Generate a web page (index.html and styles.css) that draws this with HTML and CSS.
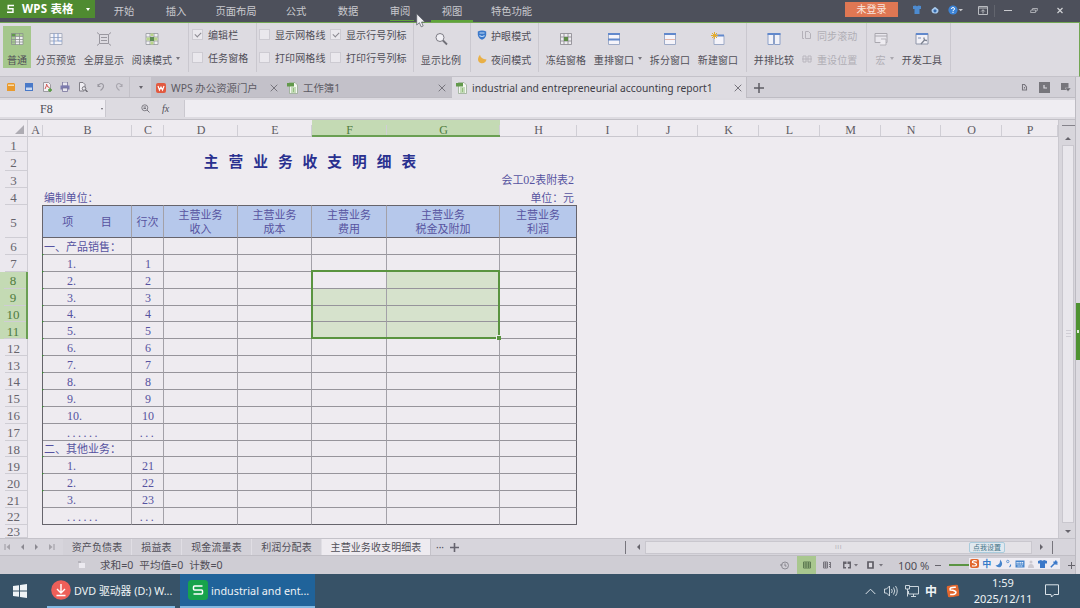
FILE: index.html
```
<!DOCTYPE html>
<html lang="zh-CN">
<head>
    <meta charset="UTF-8">
    <title>industrial and entrepreneurial accounting report1</title>
    <link rel="stylesheet" href="styles.css">
</head>
<body>

    <!-- Title bar -->
    <div class="titlebar">
        <div class="app-btn">
            <svg width="9" height="10" viewBox="0 0 9 10"><path d="M8 1.500H2.200V4.800H7V8.300H1" fill="none" stroke="#fff" stroke-width="1.400"/></svg>
            <b>WPS 表格</b><i class="caret"></i>
        </div>
        <div class="menu">
            <span>开始</span><span>插入</span><span class="wide">页面布局</span><span>公式</span><span>数据</span><span class="hover">审阅</span><span class="active">视图</span><span class="wide last">特色功能</span>
        </div>
        <div class="login">未登录</div>
        <div class="win-tools">
            <svg width="10" height="10" viewBox="0 0 10 10"><path d="M1 1L3.500 .5Q5 2 6.500 .5L9 1V4H7.500V9H2.500V4H1Z" fill="#4d8bd0"/></svg>
            <svg width="10" height="10" viewBox="0 0 10 10"><path d="M1.500 5.500Q1.500 3.800 3 3.500Q5 .5 7 3.500Q8.700 3.800 8.500 5.700Q8.300 8.500 5 8.500T1.500 5.500Z" fill="#a9cbef"/><circle cx="5" cy="5.800" r="1.600" fill="#3569ab"/></svg>
            <svg width="15" height="10" viewBox="0 0 15 10"><circle cx="5" cy="5" r="4.600" fill="#3c83d6"/><path d="M3.500 4Q3.500 2.500 5 2.500T6.500 4Q6.500 5 5 5.500V6.300M5 7V8" fill="none" stroke="#fff"/><path d="M10.500 4H15L12.700 6.300Z" fill="#c8c8cc"/></svg>
        </div>
        <div class="win-btns">
            <svg width="10" height="9" viewBox="0 0 10 9"><path d="M.5 .5H9.500V8.500H.5ZM.5 2H9.500M5 7.500V4M3.200 5.500L5 3.700L6.800 5.500" fill="none" stroke="#b9bbc0"/></svg>
            <i class="vline"></i>
            <svg width="8" height="9" viewBox="0 0 8 9"><path d="M0 4.500H8" stroke="#c9cace"/></svg>
            <svg width="8" height="9" viewBox="0 0 8 9"><path d="M1 4H5.500V6.500H.5ZM2.500 4V2.500H7.500L7 5H5.500" fill="none" stroke="#a9abb1"/></svg>
            <svg width="8" height="9" viewBox="0 0 8 9"><path d="M1.500 2L6.500 7M6.500 2L1.500 7" stroke="#d0d1d5" stroke-width="1.200"/></svg>
        </div>
        <svg class="cursor" width="10" height="16" viewBox="0 0 10 16"><path d="M.7 .8V12L3.400 9.700L5.200 13.800L7.200 13L5.500 9H9Z" fill="#f1f1f5" stroke="#555962" stroke-width=".7"/></svg>
    </div>

    <!-- Ribbon -->
    <div class="ribbon">
        <div class="group g-view">
            <div class="tool on">
                <svg width="14" height="14" viewBox="0 0 14 14"><path d="M1 2H13V13H1Z" fill="#f1f0f3"/><path d="M1 2H5V13H1ZM1 2H13V4H1Z" fill="#a7cb91"/><path d="M1 1.500H5.500V4.500H1Z" fill="#5f9b48"/><path d="M1.500 1.500H13V12.500H1.500ZM1 4.500H13M1 7.500H13M1 10H13M5.500 1V13M9.500 1V13" fill="none" stroke="#8a928d" stroke-width=".8"/></svg>
                <span>普通</span>
            </div>
            <div class="tool">
                <svg width="14" height="14" viewBox="0 0 14 14"><path d="M1 1.500H13V12.500H1ZM1 5.500H13M1 9H9" fill="#f4f3f8" stroke="#a9afc0"/><path d="M9 1.500V9H13M5 1.500V12.500" fill="none" stroke="#7f9bd0"/></svg>
                <span>分页预览</span>
            </div>
            <div class="tool">
                <svg width="14" height="14" viewBox="0 0 14 14"><path d="M2.500 2.500H11.500V11.500H2.500ZM4 5.500H10M4 8.500H10M0 .5L2.500 2.500M14 .5L11.500 2.500M0 13.500L2.500 11.500M14 13.500L11.500 11.500" fill="none" stroke="#99979f"/></svg>
                <span>全屏显示</span>
            </div>
            <div class="tool drop">
                <svg width="14" height="14" viewBox="0 0 14 14"><path d="M1 1.500H13V12.500H1ZM1 5H13M1 9H13M5 1V13M9 1V13" fill="#f1f0f3" stroke="#96989d" stroke-width=".8"/><path d="M5.500 1.500H8.500V4H5.500ZM5.500 9.500H8.500V12.500H5.500ZM1.500 5.500H5V8.500H1.500ZM9 5.500H12.500V8.500H9Z" fill="#b9d68a"/><path d="M5 5H9V9H5Z" fill="#5e8b54"/></svg>
                <span>阅读模式</span>
            </div>
        </div>
        <div class="group checks g-pane">
            <label class="ck"><i class="box yes"></i>编辑栏</label>
            <label class="ck"><i class="box"></i>任务窗格</label>
        </div>
        <div class="group checks g-grid">
            <label class="ck"><i class="box"></i>显示网格线</label>
            <label class="ck"><i class="box yes"></i>显示行号列标</label>
            <label class="ck"><i class="box"></i>打印网格线</label>
            <label class="ck"><i class="box"></i>打印行号列标</label>
        </div>
        <div class="group g-zoom">
            <div class="tool">
                <svg width="14" height="14" viewBox="0 0 14 14"><circle cx="6" cy="5.500" r="4" fill="#f1f0f5" stroke="#7d7c84"/><path d="M9 8.500L13 12.500" stroke="#6f6e76" stroke-width="1.800"/></svg>
                <span>显示比例</span>
            </div>
        </div>
        <div class="group pair g-eye">
            <div class="mini"><svg width="10" height="10" viewBox="0 0 10 10"><path d="M.8 1.500Q5-.5 9.200 1.500V5Q8.500 8.500 5 9.700Q1.500 8.500 .8 5Z" fill="#3b78c9"/><path d="M2.500 3H7.500M2.500 5.500Q5 7.500 7.500 5.500" fill="none" stroke="#c4dcf7" stroke-width="1.200"/></svg>护眼模式</div>
            <div class="mini"><svg width="10" height="10" viewBox="0 0 10 10"><path d="M3 .8Q3.500 5 9.500 5.500Q8.500 9.500 4.500 9.200Q.8 8.500 1 5Q1.200 2.500 3 .8Z" fill="#e9b047"/></svg>夜间模式</div>
        </div>
        <div class="group g-window">
            <div class="tool">
                <svg width="14" height="14" viewBox="0 0 14 14"><path d="M1.500 1.500H12.500V12.500H1.500ZM1.500 5H12.500M1.500 9H12.500M5 1.500V12.500M9 1.500V12.500" fill="#edebef" stroke="#919096" stroke-width=".9"/><path d="M5 5H9V9H5Z" fill="#5e8b47"/></svg>
                <span>冻结窗格</span>
            </div>
            <div class="tool drop">
                <svg width="14" height="14" viewBox="0 0 14 14"><path d="M1.500 1.500H12.500V12.500H1.500Z" fill="#f5f4fa" stroke="#9eabc7"/><path d="M1 2H13M1 7.500H13" stroke="#6188cc" stroke-width="2"/></svg>
                <span>重排窗口</span>
            </div>
            <div class="tool">
                <svg width="14" height="14" viewBox="0 0 14 14"><path d="M1.500 1.500H12.500V12.500H1.500Z" fill="#f5f4fa" stroke="#9eabc7"/><path d="M1 2H13" stroke="#6188cc" stroke-width="2"/><path d="M2 7.500H12" stroke="#e4b3a6"/></svg>
                <span>拆分窗口</span>
            </div>
            <div class="tool">
                <svg width="14" height="14" viewBox="0 0 14 14"><path d="M3 3.500H13V12.500H3Z" fill="#f5f4fa" stroke="#9eabc7"/><path d="M5 3.500H13" stroke="#6188cc" stroke-width="2"/><path d="M3.500 0V7M0 3.500H7M1 1L6 6M6 1L1 6" stroke="#e4ac2c"/></svg>
                <span>新建窗口</span>
            </div>
        </div>
        <div class="group g-side">
            <div class="tool">
                <svg width="14" height="14" viewBox="0 0 14 14"><path d="M1 1.500H6.500V12.500H1ZM7.500 1.500H13V12.500H7.500Z" fill="#f2f2f8" stroke="#8ca0c8"/><path d="M.5 2H7M7 2H13.500" stroke="#6188cc" stroke-width="2"/></svg>
                <span>并排比较</span>
            </div>
            <div class="pair off">
                <div class="mini"><svg width="10" height="10" viewBox="0 0 10 10"><path d="M.5 1V8.500H2M3.500 1.500H6.500L8.500 3.500V8.500H3.500Z" fill="none" stroke="#b4b1b9"/></svg>同步滚动</div>
                <div class="mini"><svg width="10" height="10" viewBox="0 0 10 10"><path d="M1 2H4V8H1ZM6 2H9V8H6ZM0 5H10" fill="none" stroke="#b9b6be"/></svg>重设位置</div>
            </div>
        </div>
        <div class="group g-dev">
            <div class="tool drop off">
                <svg width="14" height="14" viewBox="0 0 14 14"><path d="M1 1.500H13V10.500H1ZM1 4H13" fill="#e9e7ed" stroke="#a9a7ae"/><path d="M7 7H12V13H6" fill="#efedf2" stroke="#b4b2b9"/></svg>
                <span>宏</span>
            </div>
            <div class="tool">
                <svg width="14" height="14" viewBox="0 0 14 14"><path d="M1 1.500H13V12H1Z" fill="#f2f1f7" stroke="#8e95a8"/><path d="M1 2H13" stroke="#6188cc" stroke-width="2"/><path d="M6 12L10 7.500M9 5.500Q8.500 8.500 12 8.500" stroke="#7c828f" stroke-width="1.300" fill="none"/><path d="M3 6H6" stroke="#7c8fb4"/></svg>
                <span>开发工具</span>
            </div>
        </div>
    </div>

    <div class="main">
        <div class="workspace">

            <!-- Quick access and document tabs -->
            <div class="doc-bar">
                <div class="quick">
                    <svg width="10" height="10" viewBox="0 0 10 10"><path d="M1 2L2 1H8L9 2V9H1Z" fill="#e99a2e"/><path d="M2 2.500H8V4H2Z" fill="#f6dcae"/></svg>
                    <svg width="10" height="10" viewBox="0 0 10 10"><path d="M1 1H9V9H1Z" fill="#4979c8"/><path d="M2 5.500H8V8H2Z" fill="#c9d9f2"/></svg>
                    <svg width="10" height="10" viewBox="0 0 10 10"><path d="M1.500 .5H6.500L8.500 2.500V9.500H1.500Z" fill="#f3f0f4" stroke="#8d8a92" stroke-width=".8"/><path d="M3 7Q5 3 4.500 2Q5.500 6 7.500 5.500" fill="none" stroke="#d05854"/><path d="M6 8H10M8 6V10" stroke="#559a3e" stroke-width="1.300"/></svg>
                    <svg width="10" height="10" viewBox="0 0 10 10"><path d="M2.500 0H7.500V4H2.500Z" fill="#e8e6f0" stroke="#77749b" stroke-width=".8"/><path d="M.5 3.500H9.500V7.500H.5Z" fill="#7c7bb0"/><path d="M2.500 6H7.500V9.500H2.500Z" fill="#e8e6f0" stroke="#77749b" stroke-width=".8"/></svg>
                    <svg width="10" height="10" viewBox="0 0 10 10"><path d="M6 9H1.500V.5H5L7 2.500V5" fill="#efedf2" stroke="#77757d" stroke-width=".9"/><circle cx="6" cy="6.500" r="1.800" fill="none" stroke="#77757d"/><path d="M7.500 8L9.500 10" stroke="#66646c" stroke-width="1.200"/></svg>
                    <svg width="10" height="10" viewBox="0 0 10 10"><path d="M2 2V4.500H4.500M2 4.500Q4-.2 7 2.500Q8.800 5 4.500 8.500" fill="none" stroke="#9a98a0" stroke-width="1.100"/></svg>
                    <svg width="10" height="10" viewBox="0 0 10 10"><path d="M8 2V4.500H5.500M8 4.500Q6-.2 3 2.500Q1.200 5 5.500 8.500" fill="none" stroke="#a9a7af" stroke-width="1.100"/></svg>
                </div>
                <div class="quick-more"><i class="caret"></i></div>
                <div class="doc d1">
                    <svg width="10" height="10" viewBox="0 0 10 10"><rect width="10" height="10" rx="2" fill="#e2593f"/><path d="M2 3L3.500 7L5 4L6.500 7L8 3" fill="none" stroke="#fff" stroke-width="1.200"/></svg>
                    <span>WPS 办公资源门户</span><svg class="x" width="8" height="8" viewBox="0 0 8 8"><path d="M.7 .7L7.300 7.300M7.300 .7L.7 7.300"/></svg>
                </div>
                <div class="doc d2">
                    <svg width="11" height="12" viewBox="0 0 11 12"><path d="M2.500 .5H8L10.500 3V11.500H2.500Z" fill="#f4f6f2" stroke="#8ea586" stroke-width=".7"/><path d="M0 1H7V4.500H0Z" fill="#62994b"/><path d="M4 6H9M4 8H9M4 10H9M6.500 6V10" stroke="#94bf7e"/></svg>
                    <span>工作簿1</span><svg class="x" width="8" height="8" viewBox="0 0 8 8"><path d="M.7 .7L7.300 7.300M7.300 .7L.7 7.300"/></svg>
                </div>
                <div class="doc d3">
                    <svg width="11" height="12" viewBox="0 0 11 12"><path d="M2.500 .5H8L10.500 3V11.500H2.500Z" fill="#f4f6f2" stroke="#8ea586" stroke-width=".7"/><path d="M0 1H7V4.500H0Z" fill="#62994b"/><path d="M4 6H9M4 8H9M4 10H9M6.500 6V10" stroke="#94bf7e"/></svg>
                    <span>industrial and entrepreneurial accounting report1</span><svg class="x" width="8" height="8" viewBox="0 0 8 8"><path d="M.7 .7L7.300 7.300M7.300 .7L.7 7.300"/></svg>
                </div>
                <div class="doc-new">
                    <svg width="10" height="10" viewBox="0 0 10 10"><path d="M5 0V10M0 5H10" stroke="#5e5c64" stroke-width="1.500"/></svg>
                </div>
                <div class="doc-tools">
                    <svg width="7" height="8" viewBox="0 0 7 8"><path d="M1.500 3V7H5.500V4L3.500 1.500H1.500ZM3.500 4V5.500" fill="none" stroke="#77757d" stroke-width="1.100"/></svg>
                    <svg width="11" height="11" viewBox="0 0 11 11"><path d="M0 0H11V11H0Z" fill="#77767c"/><path d="M5 3V6H8" fill="none" stroke="#dddbe1" stroke-width="1.200"/></svg>
                    <svg width="10" height="10" viewBox="0 0 10 10"><path d="M0 1H7.500V8H0Z" fill="#77767c"/><path d="M4 6H10L7 9.500Z" fill="#66656c" stroke="#d2d0d7" stroke-width=".5"/></svg>
                </div>
            </div>

            <!-- Formula bar -->
            <div class="formula">
                <div class="name-box"><span>F8</span><i class="caret"></i></div>
                <div class="fx">
                    <svg width="9" height="9" viewBox="0 0 9 9"><circle cx="3.800" cy="3.800" r="3" fill="none" stroke="#77757d" stroke-width=".9"/><path d="M6 6L8.500 8.500M2.500 3H5M2.500 4.500H5" stroke="#77757d"/></svg>
                    <em>fx</em>
                </div>
                <div class="input"></div>
            </div>

            <!-- Sheet -->
            <div class="sheet-area">
                <div class="sheet" id="sheet"></div>
                <div class="vscroll">
                    <i class="split"></i>
                    <i class="up"></i>
                    <div class="thumb"><i></i><i></i><i></i></div>
                    <i class="down"></i>
                </div>
            </div>

            <!-- Sheet tabs -->
            <div class="tabs">
                <div class="nav">
                    <svg width="7" height="6" viewBox="0 0 7 6"><path d="M1 0V6" stroke="#9a98a0"/><path d="M6 0V6L2.500 3Z" fill="#a5a3aa"/></svg>
                    <svg width="5" height="6" viewBox="0 0 5 6"><path d="M4 0V6L1 3Z" fill="#8b8991"/></svg>
                    <svg width="5" height="6" viewBox="0 0 5 6"><path d="M1 0V6L4 3Z" fill="#8b8991"/></svg>
                    <svg width="7" height="6" viewBox="0 0 7 6"><path d="M6 0V6" stroke="#9a98a0"/><path d="M1 0V6L4.500 3Z" fill="#a5a3aa"/></svg>
                </div>
                <span class="tab">资产负债表</span><span class="tab t2">损益表</span><span class="tab t3">现金流量表</span><span class="tab t3">利润分配表</span><span class="tab cur">主营业务收支明细表</span>
                <span class="dots">···</span>
                <svg width="9" height="9" viewBox="0 0 9 9"><path d="M4.500 0V9M0 4.500H9" stroke="#66646f" stroke-width="1.600"/></svg>
                <div class="hscroll">
                    <i class="bar"></i><i class="left"></i>
                    <div class="track"><span class="grip">ııı</span><span class="tip">点我设置</span></div>
                    <i class="right"></i><i class="bar"></i>
                </div>
            </div>

            <!-- Status bar -->
            <div class="status">
                <svg class="rec" width="8" height="8" viewBox="0 0 8 8"><path d="M1 2H7V7H1Z" fill="#eceaf0"/><path d="M0 1H3" stroke="#9d9ba3"/></svg>
                <span class="sum"><span>求和=0</span><span>平均值=0</span><span>计数=0</span></span>
                <div class="views">
                    <svg width="9" height="9" viewBox="0 0 9 9"><circle cx="5" cy="4.500" r="3.500" fill="none" stroke="#85838b" stroke-width=".9"/><path d="M5 2.500V5H6.500M0 4H2.500" stroke="#85838b" fill="none"/></svg>
                    <div class="von"><svg width="8" height="8" viewBox="0 0 8 8"><path d="M.5 1H7.500V7H.5ZM.5 3H7.500M.5 5H7.500M3 1V7M5.500 1V7" fill="none" stroke="#5f7b53"/></svg></div>
                    <svg width="8" height="8" viewBox="0 0 8 8"><path d="M.5 1H4.500V7H.5ZM.5 3H4.500M.5 5H4.500M2.500 1V7M6 1.500H8M6 3.500H8M6 5.500H8M7.500 1V7" fill="none" stroke="#77757d"/></svg>
                    <svg width="16" height="8" viewBox="0 0 16 8"><path d="M0 .5H3.500V3H0ZM4.500 .5H8V3H4.500ZM0 3H1.500V7.500H0ZM6.500 3H8V7.500H6.500ZM0 6H3V7.500H0ZM5 6H8V7.500H5Z" fill="#66646c"/><path d="M11 3H15L13 5.500Z" fill="#77757d"/></svg>
                    <svg width="16" height="8" viewBox="0 0 16 8"><path d="M1 1H6V7H1Z" fill="#dcdae0" stroke="#5e5c64" stroke-width="1.700"/><path d="M12 3H16L14 5.500Z" fill="#77757d"/></svg>
                </div>
                <span class="pct">100 %</span>
                <i class="minus"></i>
                <i class="slide"></i>
                <div class="ime">
                    <svg width="9" height="9" viewBox="0 0 9 9"><rect width="9" height="9" rx="2" fill="#e2672e"/><path d="M7 2Q2 1 2.500 3.500Q7 4.500 6.500 6Q6 7.500 2 6.800" fill="none" stroke="#fff" stroke-width="1.200"/></svg>
                    <b>中</b>
                    <svg width="8" height="9" viewBox="0 0 8 9"><path d="M5 .5Q9 5 5.500 8Q2.500 9 .5 6.500Q5.500 6 5 .5Z" fill="#4684cb"/></svg>
                    <svg width="6" height="9" viewBox="0 0 6 9"><circle cx="1.800" cy="2.500" r="1.200" fill="none" stroke="#4684cb" stroke-width=".8"/><path d="M4.500 5.500Q5 7 3.500 8" fill="none" stroke="#4684cb" stroke-width="1.200"/></svg>
                    <svg width="10" height="8" viewBox="0 0 10 8"><path d="M.5 .5H9.500V7.500H.5Z" fill="#4684cb"/><path d="M1.500 2.500H8.500M1.500 4H8.500M2.500 6H7.500" stroke="#e5eefb" stroke-dasharray="1.300 .5"/></svg>
                    <svg width="6" height="8" viewBox="0 0 6 8"><circle cx="3" cy="2" r="1.500" fill="#ccc9d1"/><path d="M0 8Q0 4 3 4T6 8Z" fill="#ccc9d1"/></svg>
                    <svg width="9" height="8" viewBox="0 0 9 8"><path d="M0 1L3 0Q4.500 1.500 6 0L9 1V3.500H7V8H2V3.500H0Z" fill="#3b78c9"/></svg>
                    <svg width="8" height="8" viewBox="0 0 8 8"><path d="M.8 7.200L5 3M4 1.500Q4 4 7.500 4M6 .5L5.500 2.500L7.500 2.200" fill="none" stroke="#3b78c9" stroke-width="1.500"/></svg>
                </div>
                <i class="plus"></i>
            </div>
        </div>
        <div class="side"><i></i></div>
    </div>

    <!-- Windows taskbar -->
    <div class="taskbar">
        <svg class="start" width="14" height="14" viewBox="0 0 14 14"><path d="M0 2L6 1.200V6.500H0ZM7 1L14 0V6.500H7ZM0 7.500H6V12.800L0 12ZM7 7.500H14V14L7 13Z" fill="#eff3f6"/></svg>
        <div class="task">
            <svg width="20" height="20" viewBox="0 0 20 20"><circle cx="10" cy="10" r="9.800" fill="#ed5f59"/><path d="M10 4V12.500M6 9L10 13L14 9M5.500 15.500H14.500" fill="none" stroke="#fff" stroke-width="1.400"/></svg>
            <span>DVD 驱动器 (D:) W...</span>
        </div>
        <div class="task focus">
            <svg width="20" height="20" viewBox="0 0 20 20"><rect width="20" height="20" rx="3.500" fill="#17a34c"/><path d="M14.500 6H6.500Q5.500 6 5.500 7V9Q5.500 10 6.500 10H13.500Q14.500 10 14.500 11V13Q14.500 14 13.500 14H5.500" fill="none" stroke="#fff" stroke-width="1.500"/></svg>
            <span>industrial and ent...</span>
        </div>
        <div class="tray">
            <svg width="11" height="7" viewBox="0 0 11 7"><path d="M.7 6L5.500 1.200L10.300 6" fill="none" stroke="#dbe3e9"/></svg>
            <svg width="14" height="12" viewBox="0 0 14 12"><path d="M.5 4H2.500L5.500 1V11L2.500 8H.5ZM7.500 4Q9 6 7.500 8M9.500 2.500Q12 6 9.500 9.500M11.500 1Q15 6 11.500 11" fill="none" stroke="#dbe3e9" stroke-width=".9"/></svg>
            <svg width="14" height="12" viewBox="0 0 14 12"><path d="M5 1.500H13.500V9H3.500V6M.5 .5H4.500V4H.5ZM2.500 4V11.500M6 11.500H11M8.500 9V11.500" fill="none" stroke="#dbe3e9" stroke-width=".9"/></svg>
            <b>中</b>
            <svg class="sg" width="12" height="12" viewBox="0 0 9 9"><rect width="9" height="9" rx="2" fill="#e2672e"/><path d="M7 2Q2 1 2.500 3.500Q7 4.500 6.500 6Q6 7.500 2 6.800" fill="none" stroke="#fff" stroke-width="1.200"/></svg>
        </div>
        <div class="clock">1:59<br>2025/12/11</div>
        <svg class="note" width="14" height="14" viewBox="0 0 14 14"><path d="M.5 .8H13.500V10.500H9L6.500 13L6 10.500H.5Z" fill="none" stroke="#dbe3e9"/></svg>
    </div>

    <script src="sheet.js"></script>
</body>
</html>
```
FILE: styles.css
```
* {
    box-sizing: border-box;
    margin: 0;
    padding: 0;
}

body {
    width: 1080px;
    height: 608px;
    overflow: hidden;
    display: flex;
    flex-direction: column;
    font-family: 'Noto Sans', 'Noto Sans CJK SC', sans-serif;
    font-size: 10px;
    color: #504e57;
    background: #eeebf0;
}

svg {
    display: block;
    flex: none;
}

i {
    flex: none;
}

span, label {
    white-space: nowrap;
}

.caret {
    border: 2px solid transparent;
    border-top: 3px solid #66646c;
    border-bottom: 0;
}

/* Title bar */
.titlebar {
    position: relative;
    height: 23px;
    flex: none;
    display: flex;
    background: #4d505b;
    border-bottom: 1px solid #72a653;
}

.app-btn {
    width: 95px;
    height: 18px;
    padding-left: 6px;
    display: flex;
    align-items: center;
    background: #4f8b31;
    color: #fff;
}

.app-btn b {
    width: 59px;
    margin-left: 7px;
    font-size: 11.5px;
    line-height: 16px;
    letter-spacing: .2px;
    white-space: nowrap;
}

.app-btn .caret {
    border-top-color: #fff;
    margin-left: 5px;
}

.menu {
    display: flex;
    padding-left: 3px;
    font-size: 10.3px;
    color: #c9c9ce;
}

.menu span {
    width: 52px;
    height: 22px;
    line-height: 23px;
    text-align: center;
}

.menu .wide {
    width: 68px;
}

.menu .hover {
    background: linear-gradient(#5fa439, #5fa439) 16px 20px / 24px 1px no-repeat;
}

.menu .active {
    background: linear-gradient(#5fa439, #5fa439) 5px 20px / 42px 2px no-repeat;
}

.menu .last {
    width: 67px;
}

.login {
    width: 53px;
    height: 15px;
    margin: 2px 14px 0 auto;
    line-height: 15px;
    text-align: center;
    background: #df7753;
    color: #f9e5de;
}

.win-tools {
    width: 53px;
    height: 19px;
    display: flex;
    align-items: center;
    gap: 8px;
}

.win-btns {
    width: 115px;
    height: 21px;
    padding-left: 13px;
    display: flex;
    align-items: center;
    gap: 18px;
}

.win-btns .vline {
    width: 1px;
    height: 12px;
    margin: 0 -9px 0 -12px;
    background: #62656e;
}

.cursor {
    position: absolute;
    left: 416px;
    top: 13px;
    z-index: 2;
}

/* Ribbon */
.ribbon {
    height: 54px;
    flex: none;
    display: flex;
    background: #dddbe1;
    border-right: 1px solid #72a653;
    border-bottom: 1px solid #c4c2c9;
}

.group {
    height: 49px;
    display: flex;
    gap: 8px;
    border-right: 1px solid #cac8cf;
    padding-top: 3px;
}

.tool {
    position: relative;
    width: 40px;
    height: 42px;
    padding-top: 6px;
    display: flex;
    flex-direction: column;
    align-items: center;
    gap: 7px;
}

.tool span {
    line-height: 15px;
    letter-spacing: .1px;
}

.tool.on {
    width: 28px;
    margin-right: -3px;
    background: #a5c78c;
}

.tool.drop::after {
    content: '';
    position: absolute;
    left: 44px;
    top: 31px;
    border: 2px solid transparent;
    border-top: 3px solid #77757d;
    border-bottom: 0;
}

.off {
    color: #b0aeb5;
}

.g-view { width: 189px; padding-left: 3px; }
.g-pane { width: 68px; padding-left: 3px; }
.g-grid { width: 157px; padding-left: 2px; }
.g-zoom { width: 57px; padding-left: 7px; }
.g-eye { width: 68px; padding-left: 6px; }
.g-window { width: 208px; padding-left: 7px; gap: 8px; }
.g-side { width: 120px; padding-left: 7px; }
.g-dev { width: 84px; padding-left: 8px; gap: 16px; }

.g-window .drop {
    margin-right: 8px;
}

.g-dev .drop {
    width: 11px;
}

.g-dev .drop::after {
    left: 15px;
    border-top-color: #aaa8af;
}

.checks {
    display: grid;
    grid-template-columns: 71px;
    grid-auto-rows: 23px;
    gap: 0;
    padding-top: 0;
}

.checks.g-grid {
    grid-template-columns: 71px 80px;
}

.ck {
    display: flex;
    align-items: center;
    gap: 5px;
    letter-spacing: .1px;
}

.box {
    width: 11px;
    height: 11px;
    background: #eae8ed;
    border: 1px solid #cdcbd2;
}

.box.yes::after {
    content: '';
    display: block;
    width: 5px;
    height: 3px;
    margin: 2px 0 0 2px;
    border: solid #8b8991;
    border-width: 0 0 1px 1px;
    transform: rotate(-45deg);
}

.pair {
    display: flex;
    flex-direction: column;
    gap: 0;
    padding-top: 0;
}

.g-side .pair {
    margin: -3px 0 0;
}

.mini {
    height: 24px;
    display: flex;
    align-items: center;
    gap: 4px;
    white-space: nowrap;
    letter-spacing: .1px;
}

.g-side .mini {
    gap: 5px;
}

/* Workspace */
.main {
    height: 497px;
    flex: none;
    display: flex;
}

.workspace {
    width: 1076px;
    display: flex;
    flex-direction: column;
    border-right: 1px solid #bdbbc2;
}

.side {
    width: 4px;
    padding-top: 226px;
    background: #dddbe1;
}

.side i {
    display: block;
    height: 57px;
    background: linear-gradient(#e3eedc, #e3eedc) 1px center / 2px 3px no-repeat #4f9231;
}

.doc-bar {
    height: 21px;
    flex: none;
    display: flex;
    background: #d2d0d7;
    border-bottom: 1px solid #bebcc3;
}

.quick {
    width: 129px;
    padding-left: 6px;
    display: flex;
    align-items: center;
    gap: 8px;
}

.quick-more {
    width: 22px;
    display: flex;
    align-items: center;
    padding-left: 9px;
    border-left: 1px solid #c3c1c8;
}

.doc {
    display: flex;
    align-items: center;
    height: 20px;
    padding: 2px 5px 0 5px;
    background: #c3c1c9;
    color: #5c5a63;
}

.doc span {
    margin-left: 5px;
    flex: 1;
    font-size: 10.4px;
    line-height: 14px;
}

.x {
    stroke: #77757d;
    fill: none;
}

.d1 { width: 132px; }
.d2 { width: 169px; padding: 2px 6px 0 4px; }
.d3 { width: 294px; height: 21px; background: #dedce2; color: #403e47; padding: 1px 4px 0 4px; }

.doc.d3 span {
    font-size: 10.3px;
}

.doc-new {
    width: 30px;
    padding: 6px 0 0 7px;
    border-left: 1px solid #c0bec5;
}

.doc-tools {
    margin-left: auto;
    width: 54px;
    display: flex;
    align-items: center;
    gap: 11px;
}

.formula {
    height: 22px;
    flex: none;
    display: flex;
    padding: 2px 0;
    background: #dddbe1;
    border-bottom: 1px solid #c1bfc6;
}

.name-box {
    width: 106px;
    display: flex;
    align-items: center;
    justify-content: space-between;
    padding: 1px 2px 0 40px;
    background: #efedf2;
    border-right: 1px solid #cac8cf;
    font-family: 'Liberation Serif', serif;
    font-size: 12px;
}

.name-box .caret {
    border-width: 2px 1.5px 0;
}

.fx {
    width: 79px;
    display: flex;
    align-items: center;
    gap: 12px;
    padding-left: 35px;
    border-right: 1px solid #cac8cf;
    font-family: 'Liberation Serif', serif;
}

.input {
    flex: 1;
    background: #efedf2;
}

/* Sheet grid */
.sheet-area {
    height: 418px;
    flex: none;
    display: flex;
}

.sheet {
    position: relative;
    width: 1058px;
    height: 418px;
    overflow: hidden;
    display: grid;
    grid-template-columns: 28px 15px 89px 32px 74px 74px 75px 113px 77px 61px 60px 61px 61px 61px 60px 61px 56px;
    grid-template-rows: 17px 15px 19px 17px 17px 33px repeat(17, 16.88px) 13.1px;
    font-family: 'Liberation Serif', 'Noto Sans CJK SC', serif;
    font-size: 11px;
    color: #5653a0;
}

.sheet > div {
    min-width: 0;
    display: flex;
    align-items: center;
    white-space: nowrap;
}

.sheet .head {
    justify-content: center;
    padding-top: 4px;
    font-size: 12px;
    line-height: 12px;
    color: #5e5c64;
    background: linear-gradient(#d0ced5, #d0ced5) right 5px / 1px 12px no-repeat;
    border-bottom: 1px solid #c9c7ce;
}

.sheet .num {
    justify-content: center;
    padding-top: 2px;
    font-size: 13px;
    line-height: 12px;
    color: #66646c;
    background: linear-gradient(#cfcdd4, #cfcdd4) right bottom / 22px 1px no-repeat #ebe8ee;
    border-right: 1px solid #cfcdd4;
}

.sheet .corner {
    background: none;
    border-bottom: 1px solid #c9c7ce;
}

.corner::after {
    content: '';
    margin: 0 3px 0 auto;
    border: solid transparent;
    border-width: 0 0 9px 9px;
    border-bottom-color: #aeacb3;
}

.sheet .head.sel {
    padding-top: 5px;
    background-color: #c4dab4;
    border-bottom: 2px solid #6a9f53;
    color: #4f7a3d;
}

.sheet .num.sel {
    background-color: #c4dab4;
    border-right: 2px solid #6a9f53;
    color: #4f7a3d;
}

.sheet .title {
    grid-column: span 7;
    justify-content: center;
    padding: 2px 0 0 10px;
    font-size: 14.7px;
    font-weight: 600;
    letter-spacing: 10.05px;
    line-height: 17px;
    color: #29308f;
}

.sheet .note-row {
    grid-column: span 7;
    justify-content: space-between;
    padding: 0 3px 0 1px;
    font-size: 10.9px;
}

.wide-num {
    font-size: 12px;
}

.sheet .cell {
    position: relative;
    padding: 2px 3px 0 1px;
    line-height: 12px;
    border-right: 1px solid #a3a1a8;
    border-bottom: 1px solid #96949b;
}

.sheet .edge {
    border-right: 1px solid #66646c;
}

.sheet .cell.indent {
    padding-left: 24px;
    font-size: 12px;
}

.sheet .cell.center {
    justify-content: center;
    padding-right: 0;
    font-size: 12px;
}

.sheet .cell.dots {
    letter-spacing: 2.5px;
}

.sheet .cell.th {
    justify-content: center;
    padding: 1px 0 0;
    text-align: center;
    line-height: 14.5px;
    background: #b6c8eb;
    border-top: 1px solid #66646c;
    border-bottom-color: #66646c;
    white-space: pre;
}

.sheet .cell.lastcol {
    border-right-color: #66646c;
}

.sheet .cell.lastrow {
    border-bottom-color: #66646c;
}

.cell.warn::before {
    content: '';
    position: absolute;
    left: -1px;
    top: -1px;
    border: 1.5px solid #3b8a34;
    border-right-color: transparent;
    border-bottom-color: transparent;
}

.sheet .green {
    background: #d6e2cc;
}

.sheet .selection {
    position: absolute;
    grid-column: 7 / 9;
    grid-row: 9 / 13;
    inset: -2px 0 0 -1px;
    border: 2px solid #5a9440;
}

.selection::after {
    content: '';
    position: absolute;
    right: -3px;
    bottom: -3px;
    width: 4px;
    height: 4px;
    background: #5a9440;
    border: solid #eeebf0;
    border-width: 1px 0 0 1px;
}

.vscroll {
    width: 17px;
    display: flex;
    flex-direction: column;
    align-items: center;
    padding: 5px 1px 3px 3px;
    background: #d8d6dc;
    border-left: 1px solid #cac8cf;
}

.split {
    width: 13px;
    height: 1px;
    background: #85838b;
}

.up {
    margin: 11px 0 5px;
    border: 3px solid transparent;
    border-bottom: 3px solid #66646c;
    border-top: 0;
}

.thumb {
    flex: 1;
    width: 12px;
    padding-bottom: 2px;
    display: flex;
    flex-direction: column;
    align-items: center;
    justify-content: center;
    gap: 2px;
    background: #e9e7ec;
    border: 1px solid #c9c7ce;
}

.thumb i {
    width: 5px;
    height: 1px;
    background: #d0ced5;
}

.down {
    margin: 7px 0 2px;
    border: 3px solid transparent;
    border-top: 3px solid #66646c;
    border-bottom: 0;
}

/* Sheet tabs */
.tabs {
    height: 17px;
    flex: none;
    display: flex;
    align-items: center;
    background: #d7d5dc;
    border-top: 1px solid #c4c2c9;
}

.nav {
    width: 63px;
    display: flex;
    align-items: center;
    gap: 9px;
    padding-left: 4px;
}

.tab {
    width: 69px;
    height: 16px;
    line-height: 17px;
    text-align: center;
    letter-spacing: .1px;
    background: #d3d1d8;
    border-right: 1px solid #e0dee4;
}

.tab.t2 { width: 50px; }
.tab.t3 { width: 70px; }

.tab.cur {
    width: 109px;
    background: #eeebf0;
    border-right: 1px solid #c4c2c9;
}

.tabs .dots {
    width: 19px;
    padding-left: 5px;
    line-height: 12px;
}

.hscroll {
    margin-left: auto;
    width: 450px;
    height: 100%;
    display: flex;
    align-items: center;
}

.bar {
    width: 1px;
    height: 13px;
    background: #77757d;
}

.left {
    margin: 0 5px 0 11px;
    border: 3px solid transparent;
    border-right: 3px solid #66646c;
    border-left: 0;
}

.right {
    margin: 0 9px 0 8px;
    border: 3px solid transparent;
    border-left: 3px solid #66646c;
    border-right: 0;
}

.track {
    position: relative;
    width: 387px;
    height: 13px;
    background: #e4e2e7;
    border: 1px solid #c9c7ce;
    text-align: center;
}

.grip {
    display: block;
    font-size: 7px;
    line-height: 10px;
    letter-spacing: .5px;
    color: #b4b2b9;
}

.tip {
    position: absolute;
    left: 323px;
    top: 0;
    width: 36px;
    height: 11px;
    font-size: 7px;
    line-height: 10px;
    color: #447486;
    background: #e0e8ef;
    border: 1px solid #a9cbdc;
    border-radius: 2px;
}

/* Status bar */
.status {
    flex: 1;
    display: flex;
    align-items: center;
    background: #cfcdd4;
    border-top: 1px solid #c0bec5;
}

.rec {
    margin: 0 14px 0 78px;
}

.sum {
    width: 680px;
    display: flex;
    gap: 6px;
    font-size: 10.6px;
    line-height: 14px;
}

.views {
    width: 118px;
    display: flex;
    align-items: center;
    gap: 8px;
}

.von {
    width: 19px;
    height: 18px;
    display: flex;
    align-items: center;
    justify-content: center;
    background: #a9c78f;
}

.views .von + svg {
    margin: 0 4px 0 -1px;
}

.pct {
    width: 37px;
    font-size: 11.2px;
}

.minus {
    width: 6px;
    height: 1px;
    background: #66646c;
}

.slide {
    width: 20px;
    height: 2px;
    margin-left: 8px;
    background: #5b9443;
}

.ime {
    width: 91px;
    height: 11px;
    display: flex;
    align-items: center;
    justify-content: space-between;
    padding: 0 2px 0 1px;
    margin-bottom: 3px;
    background: #eeecf3;
    color: #357ac8;
}

.ime b {
    font-size: 9px;
    line-height: 11px;
}

.plus {
    width: 7px;
    height: 7px;
    margin-left: 8px;
    background:
        linear-gradient(#66646c, #66646c) center / 7px 1px no-repeat,
        linear-gradient(#66646c, #66646c) center / 1px 7px no-repeat;
}

/* Taskbar */
.taskbar {
    height: 34px;
    flex: none;
    display: flex;
    align-items: center;
    background: #375267;
    color: #eef2f5;
    font-size: 11px;
}

.start {
    margin: 0 20px 0 13px;
}

.task {
    width: 128px;
    height: 34px;
    display: flex;
    align-items: center;
    gap: 3px;
    margin-right: 5px;
    padding-left: 4px;
    border-bottom: 2px solid #82b9e3;
    font-size: 10.8px;
}

.task.focus {
    width: 135px;
    padding-left: 8px;
    background: #20639a;
}

.tray {
    margin-left: auto;
    width: 108px;
    display: flex;
    align-items: center;
    gap: 7px;
}

.tray svg:first-child {
    margin-right: 1px;
}

.tray b {
    margin-left: -1px;
    font-size: 12px;
}

.sg {
    margin-left: 3px;
    transform: rotate(-8deg);
}

.clock {
    width: 60px;
    font-size: 11px;
    line-height: 16px;
    text-align: center;
}

.note {
    margin: 0 21px 0 12px;
}
```
FILE: sheet.js
```
const sheet = document.getElementById('sheet');
const columns = 'ABCDEFGHIJKLMNOP'.split('');
const headers = ['项          目', '行次', '主营业务\n收入', '主营业务\n成本', '主营业务\n费用', '主营业务\n税金及附加', '主营业务\n利润'];

// Row number -> [item, line number]
const rows = {
    6: ['一、产品销售：', ''],
    17: ['......', '...'],
    18: ['二、其他业务：', ''],
    19: ['1.', '21'],
    20: ['2.', '22'],
    21: ['3.', '23'],
    22: ['......', '...']
};
for (let n = 1; n <= 10; n++) {
    rows[n + 6] = [n + '.', String(n)];
}

function add(cls, html = '') {
    const el = document.createElement('div');
    el.className = cls;
    el.innerHTML = html;
    sheet.appendChild(el);
    return el;
}

function blanks(count) {
    for (let i = 0; i < count; i++) add('blank');
}

add('num corner');
columns.forEach(c => add(c === 'F' || c === 'G' ? 'head sel' : 'head', c));

for (let r = 1; r <= 23; r++) {
    const selected = r >= 8 && r <= 11;
    add(selected ? 'num sel' : 'num', r);

    if (r === 1 || r === 23) {
        blanks(16);
        continue;
    }
    add(r >= 5 ? 'edge' : 'blank');

    if (r === 2) {
        add('title', '主营业务收支明细表');
    } else if (r === 3) {
        add('note-row', '<span></span><span>会工<span class="wide-num">02</span>表附表<span class="wide-num">2</span></span>');
    } else if (r === 4) {
        add('note-row', '<span>编制单位：</span><span>单位：元</span>');
    } else if (r === 5) {
        headers.forEach((h, i) => add('cell th' + (i === 6 ? ' lastcol' : ''), h));
    } else {
        const [item, line] = rows[r];
        const last = r === 22 ? ' lastrow' : '';
        const section = r === 6 || r === 18;
        const dots = item === '......' ? ' dots' : '';
        const warn = !section && !dots ? ' warn' : '';
        add('cell' + (section ? '' : ' indent') + dots + warn + last, item);
        add('cell center' + dots + last, line);
        for (let c = 0; c < 5; c++) {
            const green = selected && (c === 3 || (c === 2 && r > 8)) ? ' green' : '';
            add('cell' + green + last + (c === 4 ? ' lastcol' : ''));
        }
    }
    blanks(8);
}

add('selection');
```
